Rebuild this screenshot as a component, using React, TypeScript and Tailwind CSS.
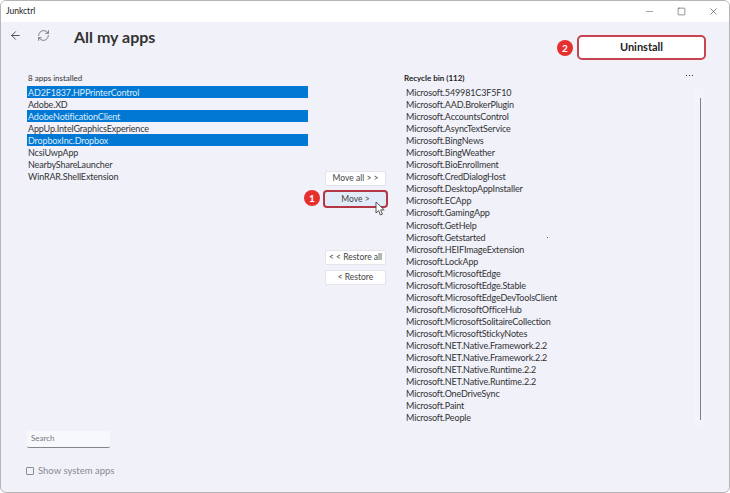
import React from 'react';
import { ArrowLeft, RefreshCw, Minus, Square, X } from 'lucide-react';

const installed = [
    { name: 'AD2F1837.HPPrinterControl', selected: true },
    { name: 'Adobe.XD' },
    { name: 'AdobeNotificationClient', selected: true },
    { name: 'AppUp.IntelGraphicsExperience' },
    { name: 'DropboxInc.Dropbox', selected: true },
    { name: 'NcsiUwpApp' },
    { name: 'NearbyShareLauncher' },
    { name: 'WinRAR.ShellExtension' },
];

const recycled = [
    'Microsoft.549981C3F5F10',
    'Microsoft.AAD.BrokerPlugin',
    'Microsoft.AccountsControl',
    'Microsoft.AsyncTextService',
    'Microsoft.BingNews',
    'Microsoft.BingWeather',
    'Microsoft.BioEnrollment',
    'Microsoft.CredDialogHost',
    'Microsoft.DesktopAppInstaller',
    'Microsoft.ECApp',
    'Microsoft.GamingApp',
    'Microsoft.GetHelp',
    'Microsoft.Getstarted',
    'Microsoft.HEIFImageExtension',
    'Microsoft.LockApp',
    'Microsoft.MicrosoftEdge',
    'Microsoft.MicrosoftEdge.Stable',
    'Microsoft.MicrosoftEdgeDevToolsClient',
    'Microsoft.MicrosoftOfficeHub',
    'Microsoft.MicrosoftSolitaireCollection',
    'Microsoft.MicrosoftStickyNotes',
    'Microsoft.NET.Native.Framework.2.2',
    'Microsoft.NET.Native.Framework.2.2',
    'Microsoft.NET.Native.Runtime.2.2',
    'Microsoft.NET.Native.Runtime.2.2',
    'Microsoft.OneDriveSync',
    'Microsoft.Paint',
    'Microsoft.People',
];

const Badge: React.FC<{ n: number; className: string }> = ({ n, className }) => (
    <div className={`absolute w-[16px] h-[16px] rounded-full bg-[#e5302f] text-white text-[10px] font-bold flex items-center justify-center ${className}`}>
        {n}
    </div>
);

const SideButton: React.FC<{ label: string; className?: string }> = ({ label, className = '' }) => (
    <div className={`w-[61px] h-[15px] bg-white rounded-[2px] border border-[#e3e4ea] text-[8.5px] text-[#444] whitespace-nowrap flex items-center justify-center ${className}`}>
        {label}
    </div>
);

export default function App() {
    return (
        <div className="relative w-[730px] h-[493px] overflow-hidden bg-[#f0f1f9] border border-[#b5b5b5] rounded-[6px] text-[#2b2b2b] font-['Lato','Open_Sans',sans-serif]">
            {/* Title bar */}
            <div className="h-[21px] bg-white flex items-center justify-between pl-[5px] text-[8.5px] text-[#222]">
                <span>Junkctrl</span>
                <div className="flex items-center gap-[22px] pr-[10px] text-[#333] -mt-[1px]">
                    <Minus size={11} strokeWidth={1.4} className="text-[#777]" />
                    <Square size={9} strokeWidth={1.4} />
                    <X size={11} strokeWidth={1.2} />
                </div>
            </div>

            {/* Header */}
            <div className="flex h-[30px] items-center pl-[8px]">
                <ArrowLeft size={13} strokeWidth={1.5} className="text-[#333] -mt-[4px]" />
                <RefreshCw size={13} strokeWidth={1.3} className="ml-[15px] text-[#555] -mt-[4px]" />
                <h1 className="ml-[24px] text-[16px] font-bold text-[#333] leading-none -mt-[1px]">All my apps</h1>
            </div>

            <div className="flex">
                {/* Installed apps */}
                <div className="w-[307px] h-[440px] pl-[26px] pt-[19px] flex flex-col">
                    <div className="pl-[1px] h-[15px] text-[8px] text-[#333] leading-[14px]">8 apps installed</div>
                    <div className="w-[281px]">
                        {installed.map((app) => (
                            <div
                                key={app.name}
                                className={`h-[12px] pl-[1px] text-[9px] tracking-[-0.15px] leading-[13px] ${app.selected ? 'bg-[#0078d4] text-[#dcebfa]' : 'text-[#333]'}`}
                            >
                                {app.name}
                            </div>
                        ))}
                    </div>
                    <div className="mt-auto mb-[14px]">
                        <div className="w-[83px] h-[17px] bg-[#f7f8fc] border-b border-[#85868c] rounded-[2px] pl-[4px] text-[8px] text-[#777] leading-[15px]">
                            Search
                        </div>
                        <div className="mt-[16px] -ml-[1px] flex items-center text-[9.5px] text-[#8a8a92]">
                            <div className="w-[8px] h-[8px] border border-[#8c8c92] rounded-[1px] mr-[4px]" />
                            Show system apps
                        </div>
                    </div>
                </div>

                {/* Move buttons */}
                <div className="w-[96px] pl-[17px] pt-[119px]">
                    <SideButton label="Move all > >" />
                    <div className="relative w-[65px] h-[18px] mt-[4px] -ml-[2px] rounded-[4px] border-2 border-[#b43746] bg-[#e2ecf9] text-[8.5px] text-[#444] flex items-center justify-center">
                        Move &gt;
                    </div>
                    <SideButton label="< < Restore all" className="mt-[42px]" />
                    <SideButton label="< Restore" className="mt-[5px]" />
                </div>

                {/* Recycle bin */}
                <div className="flex-1 pt-[19px]">
                    <div className="h-[14px] text-[8px] font-bold text-[#222] leading-[14px]">Recycle bin (112)</div>
                    <div className="pl-[1px] pt-[2px]">
                        {recycled.map((name, i) => (
                            <div key={`${name}-${i}`} className="h-[12.05px] pl-[1px] text-[9px] tracking-[-0.15px] leading-[12px] text-[#333]">
                                {name}
                            </div>
                        ))}
                    </div>
                </div>
            </div>

            {/* Uninstall */}
            <div className="absolute left-[576px] top-[34px] w-[129px] h-[25px] bg-white rounded-[5px] border-2 border-[#c8434f] text-[11px] font-bold text-[#222] flex items-center justify-center">
                Uninstall
            </div>
            <Badge n={2} className="left-[556px] top-[39px]" />
            <Badge n={1} className="left-[303px] top-[189px]" />

            {/* More menu */}
            <div className="absolute left-[685px] top-[74px] flex gap-[2px]">
                <span className="w-[1px] h-[1px] bg-[#333]" />
                <span className="w-[1px] h-[1px] bg-[#333]" />
                <span className="w-[1px] h-[1px] bg-[#333]" />
            </div>

            {/* Scrollbar */}
            <div className="absolute left-[693px] top-[87px] w-[10px] h-[338px] bg-[#f3f4fa]" />
            <div className="absolute left-[699px] top-[97px] w-[1px] h-[322px] bg-[#808186]" />

            {/* Cursor */}
            <svg className="absolute left-[374px] top-[200px]" width="11" height="15" viewBox="0 0 11 15">
                <path d="M1 1v11l2.6-2.4L5.4 14l2-0.9-1.8-4.2H9.2z" fill="#fff" stroke="#444" strokeWidth="0.9" strokeLinejoin="round" />
            </svg>

            <span className="absolute left-[546px] top-[236px] w-[1px] h-[1px] bg-[#555]" />
        </div>
    );
}
